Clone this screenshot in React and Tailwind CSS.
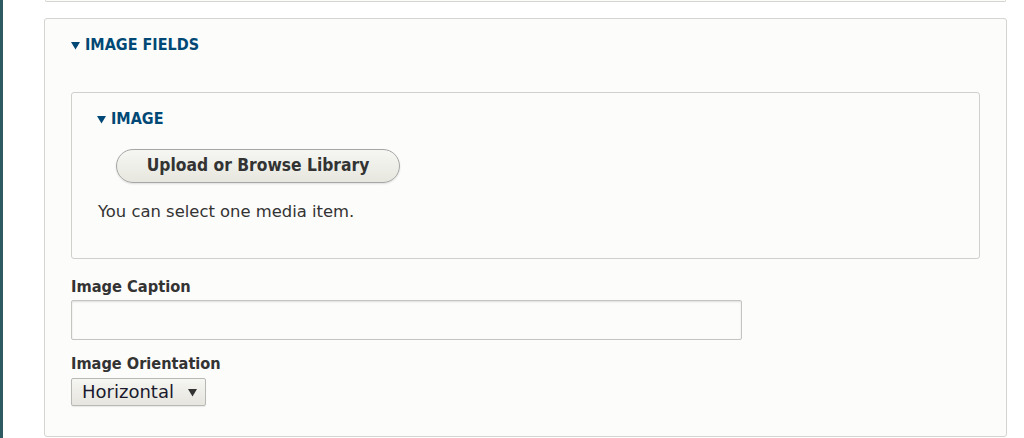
import React from 'react';

function Caret({ className = '' }) {
  return (
    <svg width="9" height="9" viewBox="0 0 9 9" className={className}>
      <path d="M0 1 H9 L4.5 8.5 Z" fill="currentColor" />
    </svg>
  );
}

const strong = { fontFamily: '"DejaVu Sans Condensed", "DejaVu Sans", sans-serif' };

export default function App() {
  const font = { fontFamily: '"DejaVu Sans", "Lucida Grande", sans-serif' };

  return (
    <div className="flex h-[438px] w-full overflow-hidden bg-white text-[#333]" style={font}>
      <div className="w-[3px] shrink-0 bg-[#2d5b61]" />

      <div className="flex flex-1 flex-col pl-[41px] pr-[17px]">
        {/* bottom edge of the previous fieldset */}
        <div className="mx-px h-[2px] rounded-b-[3px] border-x border-b border-[#d4d4d0] bg-[#fcfcfa]" />

        <fieldset className="mt-[16px] h-[419px] rounded-[3px] border border-[#d4d4d0] bg-[#fcfcfa] px-[26px] pt-[16px]">
          <div className="flex h-[20px] items-center gap-[5px] text-[16px] font-bold uppercase text-[#004875]" style={strong}>
            <Caret />
            <span>Image Fields</span>
          </div>

          <div className="mt-[37px] rounded-[3px] border border-[#cfcfcb] bg-[#fcfcfa] pb-[36px] pl-[25px] pt-[16px]">
            <div className="flex h-[20px] items-center gap-[5px] text-[16px] font-bold uppercase text-[#004875]" style={strong}>
              <Caret />
              <span>Image</span>
            </div>

            <button
              className="mt-[20px] ml-[19px] flex h-[34px] w-[284px] items-center justify-center rounded-full border border-[#a6a6a6] bg-gradient-to-b from-[#f6f6f3] to-[#e7e7df] text-[17.3px] font-bold text-[#333] shadow-[0_1px_2px_rgba(0,0,0,0.12)]"
              style={strong}
            >
              Upload or Browse Library
            </button>

            <p className="mt-[19px] ml-px h-[20px] text-[16.4px] leading-[20px] text-[#333]">
              You can select one media item.
            </p>
          </div>

          <label className="mt-[18px] block h-[20px] text-[16.3px] font-bold leading-[20px] text-[#333]" style={strong}>
            Image Caption
          </label>
          <input
            type="text"
            className="mt-[3px] block h-[40px] w-[671px] rounded-[2px] border border-[#c4c4c0] bg-[#fcfcfa] shadow-[inset_0_1px_2px_rgba(0,0,0,0.12)] outline-none"
          />

          <label className="mt-[14px] block h-[20px] text-[16.2px] font-bold leading-[20px] text-[#333]" style={strong}>
            Image Orientation
          </label>
          <div className="mt-[4px] flex h-[28px] w-[135px] items-center justify-between rounded-[2px] border border-[#b8b8b4] bg-gradient-to-b from-[#f6f6f2] to-[#e6e5de] pl-[10px] pr-[8px] shadow-[0_1px_1px_rgba(0,0,0,0.08)]">
            <span className="text-[18px] leading-[20px] text-[#1a1a2e]">Horizontal</span>
            <Caret className="text-[#333]" />
          </div>
        </fieldset>
      </div>
    </div>
  );
}
